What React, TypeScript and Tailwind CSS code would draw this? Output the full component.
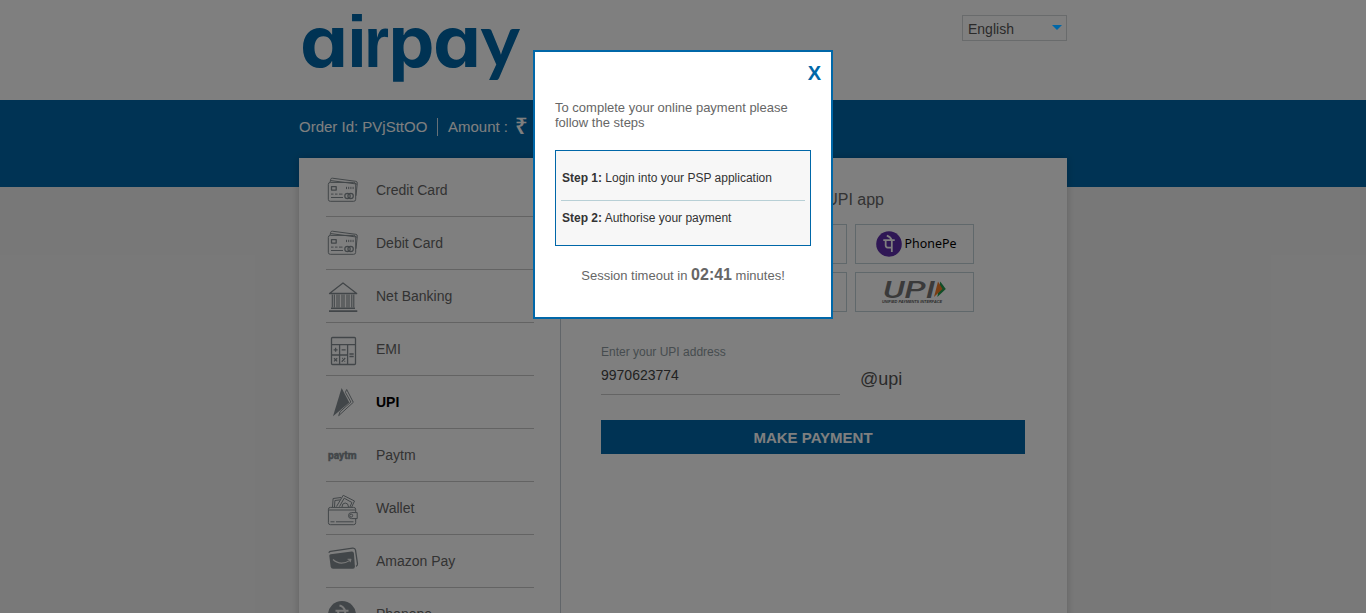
import React from "react";

const line = { fill: "none", stroke: "#858d92", strokeWidth: 1, strokeLinejoin: "round" as const };

function RowIcon({ children }: { children: React.ReactNode }) {
  return (
    <svg viewBox="0 0 34 52" className="h-[52px] w-[34px] shrink-0" {...line}>
      {children}
    </svg>
  );
}

function AirpayLogo() {
  return (
    <svg viewBox="0 0 222 84" className="h-[84px] w-[222px] overflow-visible" fill="#0067a8">
      <text y="52" className="font-[Inter,sans-serif] text-[71px] font-bold [font-feature-settings:'cv11']">
        <tspan x="1" textLength="48" lengthAdjust="spacingAndGlyphs">a</tspan>
        <tspan x="48" className="font-['Liberation_Sans',Arial,sans-serif] text-[72px]">i</tspan>
        <tspan x="65" textLength="25" lengthAdjust="spacingAndGlyphs" className="font-['Liberation_Sans',Arial,sans-serif] text-[72px]">r</tspan>
        <tspan x="89.500" textLength="46" lengthAdjust="spacingAndGlyphs">p</tspan>
        <tspan x="134" textLength="48" lengthAdjust="spacingAndGlyphs">a</tspan>
        <tspan x="181.500" className="font-[Lato,sans-serif] text-[75px]">y</tspan>
      </text>
    </svg>
  );
}

function CardIcon() {
  return (
    <RowIcon>
      <path d="M4 18.300l.7-3q.3-1.300 1.700-1.100l23.400 3.100q1.700.300 1.500 2l-1.300 12.500M5 16.600l26 3.500" />
      <rect x="2.300" y="18.400" width="27.400" height="18.900" rx="2" />
      <rect x="5.500" y="22.600" width="4.700" height="3.500" strokeWidth="1.300" />
      <path d="M20.500 22.800v2.300M22.700 22.800v2.300M24.900 22.800v2.300M27.100 22.800v2.300" />
      <path d="M5 30.100h2.500m1.500 0h2.500m1.500 0h3.500M5 33.500h12" />
      <circle cx="21.500" cy="32" r="2.700" strokeWidth="1.200" />
      <circle cx="24.600" cy="32" r="2.700" strokeWidth="1.200" />
    </RowIcon>
  );
}

function BankIcon() {
  return (
    <RowIcon>
      <path d="M3.500 23.500L17 13l13.700 10.500z" strokeWidth="1.300" />
      <path
        d="M6.300 24.500v13M8.300 24.500v13M11 24.500v13M13 24.500v13M16 24.500v13M18 24.500v13M21 24.500v13M23 24.500v13M25.800 24.500v13M27.800 24.500v13"
        strokeWidth="1.100"
      />
      <path d="M5 38.300h24M3 41.100h28.300" strokeWidth="1.600" />
    </RowIcon>
  );
}

function CalculatorIcon() {
  return (
    <RowIcon>
      <rect x="5.500" y="14.500" width="24" height="27" rx="1" strokeWidth="1.300" />
      <path d="M5.500 21.700h24M13.600 21.700v19.800M21.600 21.700v19.800M5.500 32h16.100" strokeWidth="1.300" />
      <path
        d="M7.600 26.800h4M9.600 24.800v4M15.600 26.800h4M23.400 31h4.300M23.400 33.500h4.300M8 35.200l3.200 3.200M11.200 35.200L8 38.400M19.200 35l-3.500 3.700M16 35.300h.8M18.400 38.300h.8"
        strokeWidth="1.300"
      />
    </RowIcon>
  );
}

function UpiIcon() {
  return (
    <RowIcon>
      <path d="M15.600 12l7.700 14.400L7 40.300z" fill="#858d92" stroke="none" />
      <path d="M20.700 13.500l6.600 12.800L12.700 39.700l1.300-4L24.900 26l-5.500-9.700z" />
    </RowIcon>
  );
}

function PaytmIcon() {
  return (
    <span className="flex h-[52px] w-[34px] shrink-0 items-center pl-[2px]">
      <svg viewBox="0 0 29 18" className="h-[18px] w-[29px] overflow-visible">
        <text
          x="0"
          y="13"
          textLength="28.500"
          lengthAdjust="spacingAndGlyphs"
          fill="#858d92"
          stroke="#858d92"
          strokeWidth=".5"
          className="font-[Roboto,sans-serif] text-[11px] font-bold"
        >
          paytm
        </text>
      </svg>
    </span>
  );
}

function WalletIcon() {
  return (
    <RowIcon>
      <rect x="2.400" y="25.400" width="27.300" height="17.300" rx="2" />
      <path d="M2.400 28h27.300M4.500 39.800h4M10 39.800h17.500" />
      <path d="M31.200 30.600h-5.700a3 3 0 0 0 0 6h5.700z" fill="#fff" />
      <circle cx="25.200" cy="33.600" r="1.500" />
      <path d="M6.500 25l.6-8.500 8-1M8.500 25l.4-6.500 5-.6M10.500 24.500l6.700-11.200L28.500 19l-2.800 6M13.500 24.500l4.700-8.300 7.700 4.300-2 4.500" />
      <path d="M16 25q0-4 3.200-4t3.300 4" />
    </RowIcon>
  );
}

function AmazonIcon() {
  return (
    <RowIcon>
      <path d="M3.200 17.800q-.3-1.200 1.300-1.500l22-3.100q2.600-.3 3 2l2 13.700q.2 1.700-1.500 2.400" strokeWidth="1.300" />
      <path d="M3.300 20.700q-.1-1.300 1.300-1.500l21-2.700q2.100-.2 2.300 1.700l1 13.300q.1 2.200-1.900 2.200H7q-2 0-2.300-2z" fill="#858d92" stroke="none" />
      <path d="M7 24.500q7.500 7 17.500.6M21.600 24.300l3.300.1-.8 2.700" stroke="#f0f0f0" strokeWidth="1.100" />
    </RowIcon>
  );
}

function PhonePeMark({ stroke }: { stroke: string }) {
  return (
    <path
      d="M-6.500-4.300H6.500M-3.800-4V1.500Q-3.800 4-1.500 4H3M3.200-4.300V9M3.200-4.300Q1.500-8.500-2.500-9.500"
      fill="none"
      stroke={stroke}
      strokeWidth="2"
    />
  );
}

function PhonePeRowIcon() {
  return (
    <RowIcon>
      <circle cx="16" cy="27" r="14" fill="#858d92" stroke="none" />
      <g transform="translate(16 27)">
        <PhonePeMark stroke="#f0f0f0" />
      </g>
    </RowIcon>
  );
}

const methods = [
  { label: "Credit Card", icon: <CardIcon /> },
  { label: "Debit Card", icon: <CardIcon /> },
  { label: "Net Banking", icon: <BankIcon /> },
  { label: "EMI", icon: <CalculatorIcon /> },
  { label: "UPI", icon: <UpiIcon />, active: true },
  { label: "Paytm", icon: <PaytmIcon /> },
  { label: "Wallet", icon: <WalletIcon /> },
  { label: "Amazon Pay", icon: <AmazonIcon /> },
  { label: "Phonepe", icon: <PhonePeRowIcon /> },
];

function AppTile({ children }: { children?: React.ReactNode }) {
  return <div className="flex h-10 items-center justify-center border border-[#c0d0d6]">{children}</div>;
}

function UpiLogo() {
  return (
    <svg viewBox="0 0 66 26" className="h-[26px] w-[66px] overflow-visible">
      <text
        x="1"
        y="18.500"
        textLength="52"
        lengthAdjust="spacingAndGlyphs"
        fill="#757575"
        className="font-[Roboto,sans-serif] text-[23px] font-medium italic"
      >
        UPI
      </text>
      <path d="M58.300 2.500l5.500 7.500-8.500 8z" fill="#229a50" />
      <path d="M56 2.500l4.500 7.500-8.500 8z" fill="#f27a24" />
      <text
        x="0"
        y="24"
        textLength="60"
        lengthAdjust="spacingAndGlyphs"
        fill="#555"
        className="font-['Liberation_Sans',Arial,sans-serif] text-[3.500px] font-bold italic"
      >
        UNIFIED PAYMENTS INTERFACE
      </text>
    </svg>
  );
}

function Dialog() {
  return (
    <div className="absolute left-[533px] top-[50px] z-30 flex h-[269px] w-[300px] flex-col border-2 border-[#0067a8] bg-white px-5 text-[13px] text-[#666]">
      <button className="-mr-[10px] mt-[9px] self-end text-[20px] font-bold leading-[24px] text-[#0067a8]">X</button>
      <p className="mt-[15px] leading-[15px]">To complete your online payment please follow the steps</p>
      <div className="mt-5 h-24 border border-[#0067a8] bg-[#f7f7f7] px-[5px] text-[12px] leading-[14px] text-[#333]">
        <p className="h-[50px] border-b border-[#b8d0d6] pl-px pt-5">
          <b>Step 1:</b> Login into your PSP application
        </p>
        <p className="pl-px pt-[10px]">
          <b>Step 2:</b> Authorise your payment
        </p>
      </div>
      <p className="mt-5 text-center leading-[18px]">
        Session timeout in <b className="text-[16px]">02:41</b> minutes!
      </p>
    </div>
  );
}

export default function App() {
  return (
    <div className="relative h-[613px] w-[1366px] overflow-hidden bg-[#f1f1f1] font-['Liberation_Sans',Arial,sans-serif]">
      <header className="h-[100px] bg-white">
        <div className="mx-auto flex w-[768px] items-start justify-between pt-[15px]">
          <AirpayLogo />
          <div className="flex h-[26px] w-[105px] items-center justify-between border border-[#d2d6d8] pl-[5px] pr-1 text-[14px] text-[#555]">
            <span className="pt-[3px]">English</span>
            <svg viewBox="0 0 10 5" className="relative z-30 mb-px h-[5px] w-[10px]">
              <path d="M0 0h10L5 5z" fill="#0067a8" />
            </svg>
          </div>
        </div>
      </header>

      <div className="h-[87px] bg-[#0067a8]">
        <div className="mx-auto flex w-[768px] items-start pt-[18px] text-[15px] leading-[18px] text-white">
          <span className="w-[138px]">Order Id: PVjSttOO</span>
          <span className="h-[18px] w-px bg-white/80" />
          <span className="w-[78px] pl-[10px]">Amount :</span>
          <span className="-ml-px font-['Noto_Sans',sans-serif] text-[22px] font-semibold leading-[15px]">₹</span>
        </div>
      </div>

      <main className="relative mx-auto -mt-[29px] flex h-[500px] w-[768px] bg-white shadow-[0_0_8px_rgba(0,0,0,0.2)]">
        <nav className="w-[262px] border-r border-[#c3cbd3] pl-[27px] pr-[26px] pt-[6px]">
          {methods.map((m) => (
            <div
              key={m.label}
              className={`flex h-[53px] items-center gap-4 border-b border-[#c6c6c6] text-[14px] ${m.active ? "font-bold text-black" : "text-[#666]"}`}
            >
              {m.icon}
              <span>{m.label}</span>
            </div>
          ))}
        </nav>
        <section className="flex-1 pl-10 pr-[42px] pt-[32px]">
          <h2 className="w-[283px] text-right text-[16px] leading-[20px] text-[#666]">UPI app</h2>
          <div className="mt-[14px] grid w-[373px] grid-cols-3 gap-2">
            <AppTile />
            <AppTile />
            <AppTile>
              <svg viewBox="-13 -13 26 26" className="ml-[3px] h-[26px] w-[26px]">
                <circle r="12.800" fill="#5f2eaa" />
                <g transform="scale(.88)">
                  <PhonePeMark stroke="#fff" />
                </g>
              </svg>
              <span className="ml-[3px] pt-px font-['Noto_Sans',sans-serif] text-[12.400px] text-black">PhonePe</span>
            </AppTile>
            <AppTile />
            <AppTile />
            <AppTile>
              <UpiLogo />
            </AppTile>
          </div>
          <div className="mt-8 flex">
            <label className="block h-[51px] w-[239px] border-b border-[#c8c8c8]">
              <span className="block text-[12px] leading-[16px] text-[#8d999e]">Enter your UPI address</span>
              <span className="mt-[7px] block text-[14px] leading-[16px] text-[#444]">9970623774</span>
            </label>
            <span className="pl-5 pt-[24px] text-[18px] leading-[22px] text-[#555]">@upi</span>
          </div>
          <button className="mt-[25px] block h-[34px] w-[424px] bg-[#0067a8] pt-[2px] text-[15px] font-bold text-white">MAKE PAYMENT</button>
        </section>
      </main>

      <div className="absolute inset-0 z-20 bg-black/50" />
      <Dialog />
    </div>
  );
}
